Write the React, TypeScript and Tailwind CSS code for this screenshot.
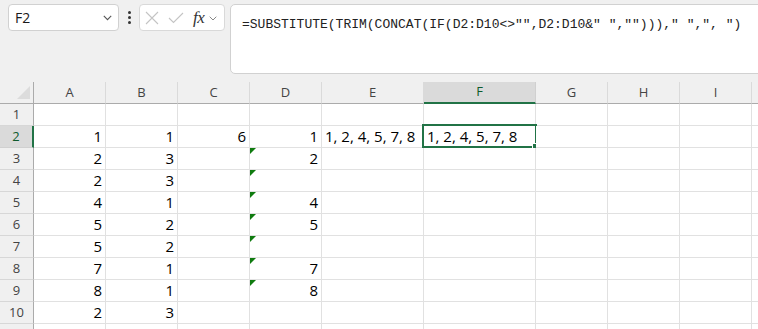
const cols = [
  { name: "A", w: "w-[72px]" },
  { name: "B", w: "w-[72px]" },
  { name: "C", w: "w-[72px]" },
  { name: "D", w: "w-[72px]" },
  { name: "E", w: "w-[102px]" },
  { name: "F", w: "w-[112px]" },
  { name: "G", w: "w-[72px]" },
  { name: "H", w: "w-[72px]" },
  { name: "I", w: "w-[72px]" },
  { name: "", w: "w-[72px]" },
];

type Cell = { v?: string; left?: boolean; tri?: boolean; sel?: boolean };

const rows: Cell[][] = [
  [],
  [{ v: "1" }, { v: "1" }, { v: "6" }, { v: "1" }, { v: "1, 2, 4, 5, 7, 8", left: true }, { v: "1, 2, 4, 5, 7, 8", left: true, sel: true }],
  [{ v: "2" }, { v: "3" }, {}, { v: "2", tri: true }],
  [{ v: "2" }, { v: "3" }, {}, { tri: true }],
  [{ v: "4" }, { v: "1" }, {}, { v: "4", tri: true }],
  [{ v: "5" }, { v: "2" }, {}, { v: "5", tri: true }],
  [{ v: "5" }, { v: "2" }, {}, { tri: true }],
  [{ v: "7" }, { v: "1" }, {}, { v: "7", tri: true }],
  [{ v: "8" }, { v: "1" }, {}, { v: "8", tri: true }],
  [{ v: "2" }, { v: "3" }],
];

const formula = '=SUBSTITUTE(TRIM(CONCAT(IF(D2:D10<>"",D2:D10&" ",""))),"' + ' ' + '",", ")';

function Toolbar() {
  return (
    <div className="flex items-start h-[82px] pt-[4px] pl-[8px]">
      <div className="shrink-0 flex items-center justify-between w-[111px] h-[27px] bg-white border border-[#d1d1d1] rounded-[4px] pl-[6px] pr-[6px]">
        <span className="text-[14px] text-[#1a1a1a]">F2</span>
        <svg width="9" height="6" viewBox="0 0 9 6" className="mt-[1px]">
          <path d="M0.8 0.8 L4.5 4.6 L8.2 0.8" fill="none" stroke="#555" strokeWidth="1.1" />
        </svg>
      </div>
      <div className="shrink-0 flex flex-col items-center justify-center gap-[2px] w-[20px] h-[27px]">
        <span className="w-[3px] h-[3px] bg-[#333] rounded-full"></span>
        <span className="w-[3px] h-[3px] bg-[#333] rounded-full"></span>
        <span className="w-[3px] h-[3px] bg-[#333] rounded-full"></span>
      </div>
      <div className="shrink-0 flex items-center w-[86px] h-[27px] bg-white border border-[#d9d9d9] rounded-[4px] pl-[5px]">
        <svg width="14" height="14" viewBox="0 0 14 14">
          <path d="M1 1 L13 13 M13 1 L1 13" stroke="#c4c4c4" strokeWidth="1.1" />
        </svg>
        <svg width="16" height="12" viewBox="0 0 16 12" className="ml-[9px]">
          <path d="M1 6 L5.5 10.5 L15 1" fill="none" stroke="#c4c4c4" strokeWidth="1.1" />
        </svg>
        <span className="ml-[9px] text-[17px] italic font-['Liberation_Serif',serif] text-[#333] leading-none tracking-[-0.5px]">fx</span>
        <svg width="8" height="5" viewBox="0 0 8 5" className="ml-[5px] mt-[2px]">
          <path d="M0.7 0.7 L4 4 L7.3 0.7" fill="none" stroke="#888" strokeWidth="1" />
        </svg>
      </div>
      <div className="shrink-0 ml-[5px] w-[560px] h-[70px] bg-white border border-[#d1d1d1] rounded-[5px] pl-[11px] pt-[5px]">
        <span className="font-['Liberation_Mono',monospace] text-[13px] text-[#222] whitespace-pre">
          {formula}
        </span>
      </div>
    </div>
  );
}

function HeaderRow() {
  return (
    <div className="flex h-[22px]">
      <div className="relative w-[34px] shrink-0 border-r border-b border-[#ababab]">
        <div className="absolute left-[17px] top-[4px] w-0 h-0 border-b-[13px] border-l-[13px] border-b-[#dcdcdc] border-l-transparent"></div>
      </div>
      {cols.map((c, i) =>
        c.name === "F" ? (
          <div
            key={i}
            className={`${c.w} shrink-0 flex items-center justify-center bg-[#dadada] border-r border-r-[#d0d0d0] border-b-2 border-b-[#217346] text-[13px] text-[#0e5a2c]`}
          >
            {c.name}
          </div>
        ) : (
          <div
            key={i}
            className={`${c.w} shrink-0 flex items-center justify-center border-r border-r-[#dadada] border-b border-b-[#ababab] text-[13px] text-[#444]`}
          >
            {c.name}
          </div>
        )
      )}
    </div>
  );
}

function Row({ n, cells }: { n: number | null; cells: Cell[] }) {
  const hl = n === 2;
  return (
    <div className="flex h-[22px]">
      <div
        className={
          hl
            ? "w-[34px] shrink-0 flex items-center justify-center bg-[#dadada] border-b border-b-[#d0d0d0] border-r-2 border-r-[#217346] text-[13px] text-[#0e5a2c]"
            : "w-[34px] shrink-0 flex items-center justify-center border-b border-b-[#d7d7d7] border-r border-r-[#ababab] text-[13px] text-[#444]"
        }
      >
        {n}
      </div>
      {cols.map((c, i) => {
        const cell = cells[i] || {};
        return (
          <div
            key={i}
            className={`${c.w} relative shrink-0 flex items-center bg-white border-r border-b border-[#e1e1e1] text-[15px] text-black whitespace-nowrap ${cell.left ? "justify-start pl-[3px] overflow-visible" : "justify-end pr-[3px]"}`}
          >
            {cell.tri && (
              <div className="absolute left-0 top-0 w-0 h-0 border-t-[6px] border-r-[6px] border-t-[#0f7b0f] border-r-transparent"></div>
            )}
            <span className="relative">{cell.v}</span>
            {cell.sel && (
              <div className="absolute -left-[2px] -top-[2px] w-[115px] h-[24px] border-2 border-[#217346]">
                <div className="absolute -right-[4px] -bottom-[4px] w-[7px] h-[7px] bg-[#217346] border border-white"></div>
              </div>
            )}
          </div>
        );
      })}
    </div>
  );
}

export default function App() {
  return (
    <div className="w-[758px] h-[329px] overflow-hidden bg-[#f0f0f0] font-['Open_Sans',sans-serif]">
      <Toolbar />
      <HeaderRow />
      {rows.map((r, i) => (
        <Row key={i} n={i + 1} cells={r} />
      ))}
      <Row n={null} cells={[]} />
    </div>
  );
}
